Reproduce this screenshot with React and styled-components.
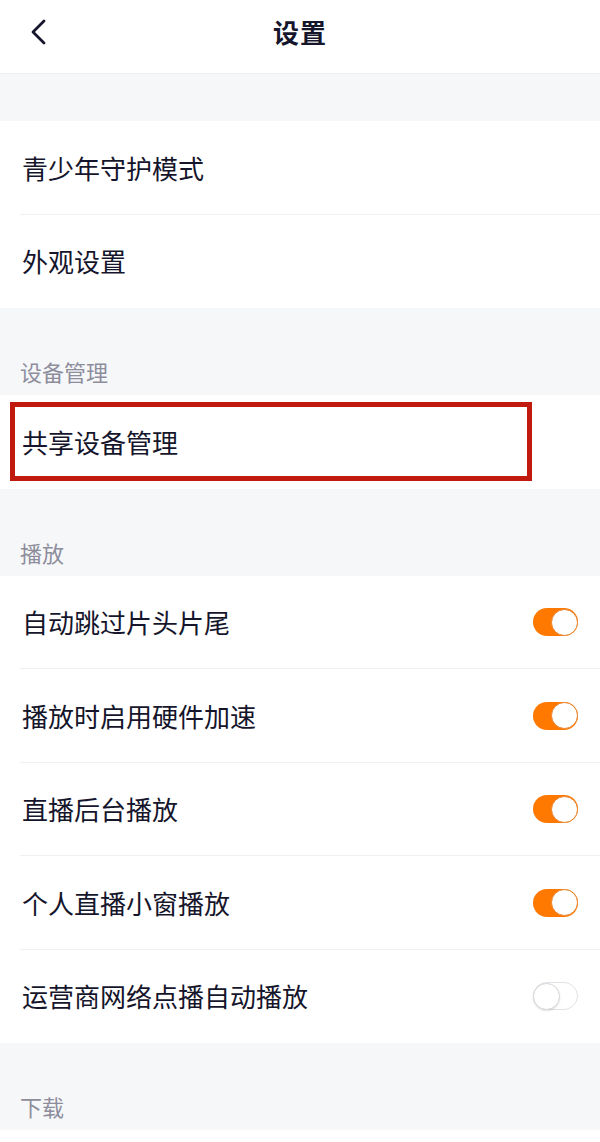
import React from "react";
import styled, { createGlobalStyle } from "styled-components";

const Global = createGlobalStyle`
  html, body { margin: 0; padding: 0; background: #ffffff; }
  body { font-family: "Noto Sans CJK SC", "Noto Sans", sans-serif; -webkit-font-smoothing: antialiased; }
  * { box-sizing: border-box; }
`;

const Page = styled.div`
  width: 600px;
  min-height: 1142px;
  background: #ffffff;
  display: flex;
  flex-direction: column;
`;

const Header = styled.header`
  height: 74px;
  border-bottom: 1px solid #efeff2;
  display: grid;
  grid-template-columns: 80px 1fr 80px;
  align-items: center;
  padding-bottom: 10px;
`;

const Back = styled.button`
  border: none;
  background: none;
  padding: 0 0 0 28px;
  display: flex;
  align-items: center;
  height: 40px;
  cursor: pointer;
`;

const Title = styled.h1`
  margin: 0;
  text-align: center;
  font-size: 26px;
  font-weight: 600;
  color: #15152b;
  letter-spacing: 1px;
`;

const Gap = styled.div`
  height: 47px;
  background: #f6f7f9;
`;

const SectionHeader = styled.div`
  height: 87px;
  background: #f6f7f9;
  padding: 52px 0 0 20px;
  font-size: 22px;
  line-height: 22px;
  color: #8d8d9c;
`;

const Group = styled.div`
  background: #ffffff;
  display: flex;
  flex-direction: column;
`;

const Row = styled.div`
  position: relative;
  height: 93.5px;
  display: flex;
  align-items: center;
  justify-content: space-between;
  padding: 0 22px 0 22px;
  &:not(:last-child)::after {
    content: "";
    position: absolute;
    left: 20px;
    right: 0;
    bottom: 0;
    height: 1px;
    background: #f1f1f4;
  }
`;

const Label = styled.span`
  font-size: 26px;
  color: #15152b;
  line-height: 1;
`;

const Track = styled.span`
  position: relative;
  width: 45px;
  height: 28px;
  border-radius: 14px;
  background: ${(p) => (p.$on ? "#ff7800" : "#ffffff")};
  border: ${(p) => (p.$on ? "none" : "1px solid #e2e2e6")};
  display: flex;
  align-items: center;
  justify-content: ${(p) => (p.$on ? "flex-end" : "flex-start")};
`;

const Knob = styled.span`
  width: 27px;
  height: 27px;
  border-radius: 50%;
  background: #ffffff;
  border: 1px solid ${(p) => (p.$on ? "#e8812a" : "#d6d6da")};
  box-shadow: ${(p) => (p.$on ? "none" : "0 1px 2px rgba(0,0,0,0.12)")};
  margin: ${(p) => (p.$on ? "0" : "-1px")};
`;

const Highlight = styled.div`
  position: absolute;
  left: 10px;
  top: 7px;
  width: 522px;
  height: 79px;
  border: 5px solid #c01a0e;
  pointer-events: none;
`;

const Toggle = ({ on }) => (
  <Track $on={on}>
    <Knob $on={on} />
  </Track>
);

const playback = [
  ["自动跳过片头片尾", true],
  ["播放时启用硬件加速", true],
  ["直播后台播放", true],
  ["个人直播小窗播放", true],
  ["运营商网络点播自动播放", false],
];

export default function App() {
  return (
    <Page>
      <Global />
      <Header>
        <Back aria-label="返回">
          <svg width="20" height="28" viewBox="0 0 20 28">
            <polyline
              points="16,3 5,14 16,25"
              fill="none"
              stroke="#15152b"
              strokeWidth="2.8"
              strokeLinecap="round"
              strokeLinejoin="round"
            />
          </svg>
        </Back>
        <Title>设置</Title>
        <span />
      </Header>
      <Gap />
      <Group>
        <Row><Label>青少年守护模式</Label></Row>
        <Row><Label>外观设置</Label></Row>
      </Group>
      <SectionHeader>设备管理</SectionHeader>
      <Group>
        <Row>
          <Label>共享设备管理</Label>
          <Highlight />
        </Row>
      </Group>
      <SectionHeader>播放</SectionHeader>
      <Group>
        {playback.map(([t, on]) => (
          <Row key={t}>
            <Label>{t}</Label>
            <Toggle on={on} />
          </Row>
        ))}
      </Group>
      <SectionHeader>下载</SectionHeader>
      <Group />
    </Page>
  );
}
